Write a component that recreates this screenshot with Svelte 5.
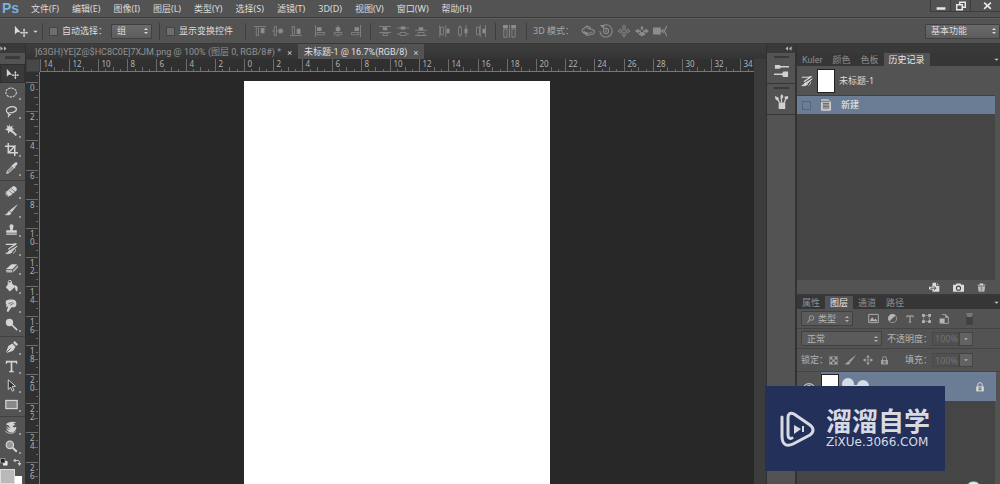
<script>
    const menus = ['文件(F)', '编辑(E)', '图像(I)', '图层(L)', '类型(Y)', '选择(S)', '滤镜(T)', '3D(D)', '视图(V)', '窗口(W)', '帮助(H)'];

    // inner markup of every icon, all on a 16 x 16 grid
    const icons = {
        move: '<path d="M1 2v10l2.500-2.500h4z" fill="currentColor"/><path d="M11.500 6v8M7.500 10h8" stroke="currentColor" stroke-width="1.200"/><path d="M11.500 5l1.500 2h-3zM11.500 15l1.500-2h-3zM7 10l2-1.500v3zM16 10l-2-1.500v3z" fill="currentColor"/>',
        marquee: '<ellipse cx="7.500" cy="8" rx="6.500" ry="5.500" fill="none" stroke="currentColor" stroke-width="1.300" stroke-dasharray="3 1"/>',
        lasso: '<path d="M4 10C-1 7 3 2 9 2s7 5 1 7c-3 1-7 0-6 2s4 0 2 1-2 1-2 3" fill="none" stroke="currentColor" stroke-width="1.500"/>',
        wand: '<path d="M6 6l8 8" stroke="currentColor" stroke-width="2.500"/><path d="M5.500 0l1 3.500L10 2 8.500 5l3.500 1.500-3.500 1L9 11 6 9l-2 3-.5-4L0 7l3-2-1-3.500 3 1.500z" fill="currentColor"/>',
        crop: '<path d="M4 0v12h12M0 4h12v12M5 11l8-8" fill="none" stroke="currentColor" stroke-width="1.800"/>',
        dropper: '<path d="M2 14l1-3 6-6 2 2-6 6z" fill="currentColor" fill-opacity=".4" stroke="currentColor" stroke-width="1.200"/><path d="M8 4l4 4 1-1-1-1 3-3c1-2-1-4-3-2L9 4 8 3z" fill="currentColor"/>',
        heal: '<path d="M2 8l7-6c3-2 7 2 5 5l-7 6c-3 2-7-2-5-5z" fill="currentColor"/><path d="M5 7l5 4M7 4l6 5" stroke="#666"/><path d="M1 8c-2 3 0 6 4 6" fill="none" stroke="currentColor" stroke-dasharray="1 1"/>',
        brush: '<path d="M15 1L8 10 6 8zM5 9l2.500 2C7 14 3 14 0 13c3 0 3-3 5-4z" fill="currentColor" stroke="currentColor" stroke-width=".6"/>',
        stamp: '<path d="M5.500 4a2.500 2.500 0 1 1 5 0c0 2-1 2-1 5h5v3h-13V9h5c0-3-1-3-1-5zM1.500 13h13v1.500h-13z" fill="currentColor"/>',
        history: '<path d="M15 5l-6 6-2-1zM6 10l3 2c-2 2-5 3-8 2 3 0 3-3 5-4z" fill="currentColor" stroke="currentColor"/><path d="M1 3h9l4-1-6 4-4 3" fill="none" stroke="currentColor" stroke-width="1.500"/><path d="M13 9c0 2-1 4-3 5" fill="none" stroke="currentColor"/>',
        eraser: '<path d="M1 10l7-6h7l-6 6z" fill="currentColor"/><path d="M1 11h8v3H2zM10 11l6-6v3l-6 6z" fill="currentColor" opacity=".75"/>',
        bucket: '<path d="M6 2l7 6-7 6-5-5z" fill="currentColor"/><path d="M4 8V2c0-2 4-2 4 0v5" fill="none" stroke="currentColor" stroke-width="1.200"/><path d="M12 6c4 1 4 4 3 8-3-1-2-4-3-5z" fill="currentColor"/>',
        smudge: '<path d="M1 2c4-2 10-2 12 0 2 3 1 7-1 8H8l-4 6-2-1 2-6-3 1 1-3-1-1z" fill="currentColor"/><path d="M4 6l5-2M6 8l5-3" stroke="#666"/>',
        dodge: '<circle cx="5.500" cy="5.500" r="4.500" fill="currentColor"/><path d="M8 8l7 7" stroke="currentColor" stroke-width="2"/>',
        pen: '<path d="M1 15l3-9 5-3 4 4-3 5z" fill="currentColor"/><path d="M1 15l6-6" stroke="#444"/><path d="M10 2l2-2 4 4-2 2z" fill="currentColor"/>',
        type: '<path d="M1 1h14v4h-1l-1-2H9v10l2 1v1H5v-1l2-1V3H3L2 5H1z" fill="currentColor"/>',
        arrow: '<path d="M4 1v12l3-3 2 5 2-1-2-5h4z" fill="#333" stroke="currentColor" stroke-width="1.200"/>',
        rect: '<rect x="1" y="3" width="14" height="10" fill="#888" stroke="currentColor" stroke-width="1.500"/>',
        rotate: '<path d="M1 4c3-3 9-4 13-2l-4 1 3 2-4 1 2 2 3-1c0 4-2 6-5 7-4 1-6-2-8-5l5 2-5-5 6 3-4-5 5 3" fill="currentColor"/><path d="M0 12c3 4 10 4 13 1" fill="none" stroke="currentColor"/>',
        zoom: '<circle cx="6" cy="6" r="4.500" fill="#999" stroke="currentColor" stroke-width="1.500"/><path d="M9.500 9.500l5 5" stroke="currentColor" stroke-width="2.500"/>',
        alignTop: '<path d="M0 2h16" stroke="currentColor"/><path d="M3 4h3v10H3z" fill="none" stroke="currentColor"/><path d="M9 4h5v7H9z" fill="currentColor"/>',
        alignMid: '<path d="M0 8h16" stroke="currentColor"/><path d="M3 2h3v12H3z" fill="#535353" stroke="currentColor"/><path d="M9 5h5v6H9z" fill="currentColor"/>',
        alignBottom: '<path d="M0 14h16" stroke="currentColor"/><path d="M3 2h3v10H3z" fill="none" stroke="currentColor"/><path d="M9 5h5v7H9z" fill="currentColor"/>',
        alignLeft: '<path d="M2 0v16" stroke="currentColor"/><path d="M4 10h10v3H4z" fill="none" stroke="currentColor"/><path d="M4 3h6v5H4z" fill="currentColor"/>',
        alignCenter: '<path d="M8 0v16" stroke="currentColor"/><path d="M3 10h10v3H3z" fill="#535353" stroke="currentColor"/><path d="M5 3h6v5H5z" fill="currentColor"/>',
        alignRight: '<path d="M14 0v16" stroke="currentColor"/><path d="M2 10h10v3H2z" fill="none" stroke="currentColor"/><path d="M6 3h6v5H6z" fill="currentColor"/>',
        distTop: '<path d="M0 2h16M0 10h16" stroke="currentColor"/><path d="M5 3h6v4H5z" fill="currentColor"/><path d="M5 11h6v3H5z" fill="none" stroke="currentColor"/>',
        distMid: '<path d="M0 4h16M0 12h16" stroke="currentColor"/><path d="M5 2h6v4H5z" fill="currentColor"/><path d="M4 10h8v4H4z" fill="#535353" stroke="currentColor"/>',
        distBottom: '<path d="M0 7h16M0 14h16" stroke="currentColor"/><path d="M5 3h6v4H5z" fill="currentColor"/><path d="M4 10h8v4H4z" fill="none" stroke="currentColor"/>',
        distLeft: '<path d="M1 0v16M9 0v16" stroke="currentColor"/><path d="M2 3h4v10H2z" fill="none" stroke="currentColor"/><path d="M10 5h4v6h-4z" fill="currentColor"/>',
        distCenter: '<path d="M4 0v16M12 0v16" stroke="currentColor"/><path d="M2 3h4v10H2z" fill="#535353" stroke="currentColor"/><path d="M10 5h4v6h-4z" fill="currentColor"/>',
        distRight: '<path d="M7 0v16M14 0v16" stroke="currentColor"/><path d="M2 3h4v10H2z" fill="none" stroke="currentColor"/><path d="M10 5h4v6h-4z" fill="currentColor"/>',
        autoAlign: '<path d="M1 5h4v10H1zM11 5h4v10h-4z" fill="none" stroke="currentColor"/><path d="M0 0h6v4H0zM10 0h6v4h-6z" fill="currentColor"/><path d="M8 0v16" stroke="currentColor"/>',
        orbit: '<path d="M7 11c-6 0-8-5-3-6 1-4 7-3 7 1 5 0 6 5 1 6l-6 1M3 8c3 3 7 3 10 1M6 4l5 2" fill="none" stroke="currentColor" stroke-width="1.200"/><path d="M2 10l5-1v5z" fill="currentColor"/>',
        roll: '<circle cx="8" cy="8" r="3" fill="none" stroke="currentColor" stroke-width="1.200"/><path d="M3 3a7 7 0 1 1-2 5" fill="none" stroke="currentColor" stroke-width="1.200"/><path d="M1 1h5v5z" fill="currentColor"/><circle cx="8" cy="8" r="1" fill="currentColor"/>',
        pan: '<path d="M8 1l2 3H9v3h3V6l3 2-3 2V9H9v3h1l-2 3-2-3h1V9H4v1L1 8l3-2v1h3V4H6z" fill="none" stroke="currentColor"/>',
        slide: '<path d="M8 2l2 3H9v2h3V5l4 3-4 3V9h-2l2 3-4 2-4-2 2-3H4v2L0 8l4-3v2h3V5H6z" fill="currentColor"/><circle cx="8" cy="8" r="1.500" fill="#535353"/>',
        camera3d: '<path d="M0 4h9v8H0zM9 8l3-3v6z" fill="currentColor"/><path d="M16 2l-3 6 3 6" fill="none" stroke="currentColor" stroke-width="1.200"/>',
        sliders: '<path d="M1 4h15M0 12h15" stroke="currentColor" stroke-width="1.500"/><path d="M1 2h5l2 2-2 2H1zM8 12l2-3h5v6h-5z" fill="currentColor"/>',
        brushes: '<path d="M5 9h7v7H5z" fill="currentColor"/><path d="M8 9V3M6 9L3 5M11 9l2-5" stroke="currentColor" stroke-width="1.300"/><path d="M1 2l4 2v3C2 7 1 5 1 2zM8 0l2 2-1 3H7V2zM11 3l4-1v3l-3 1z" fill="currentColor"/>',
        sheet: '<path d="M2 1h9l3 3v11H2z" fill="#bbb" stroke="#ddd"/><path d="M0 3h13M4 6h8M4 8h8M4 10h8M4 12h8" stroke="#555"/>',
        newDoc: '<path d="M5 1h6l4 4v9H5v-3H0V7h5z" fill="currentColor"/><path d="M2 9h8M7 6l3 3-3 3M11 1v4h4" fill="none" stroke="#444" stroke-width="1.300"/>',
        camera: '<path d="M0 4h4l1-2h6l1 2h4v10H0z" fill="currentColor"/><circle cx="8" cy="9" r="3" fill="currentColor" stroke="#444" stroke-width="1.500"/>',
        trash: '<path d="M1 3h14v1.500H1zM5 1h6v2H5zM2 6h12l-1 9H3z" fill="currentColor"/><path d="M5.500 7v7M8 7v7M10.500 7v7" stroke="#505050"/>',
        search: '<circle cx="9" cy="6" r="4.500" fill="none" stroke="currentColor" stroke-width="1.500"/><path d="M5.500 9.500L1 15" stroke="currentColor" stroke-width="2"/>',
        picture: '<path d="M1 2h14v12H1z" fill="none" stroke="currentColor" stroke-width="1.300"/><path d="M2 12l4-6 3 4 2-2 3 4z" fill="currentColor"/>',
        adjust: '<circle cx="8" cy="8" r="6" fill="none" stroke="currentColor"/><path d="M12.500 3.500L3.500 12A6 6 0 0 1 12.500 3.500z" fill="currentColor"/>',
        shape: '<path d="M3 3h10v10H3z" fill="none" stroke="currentColor"/><path d="M0 0h5v5H0zM11 0h5v5h-5zM0 11h5v5H0zM11 11h5v5h-5z" fill="currentColor"/>',
        smart: '<path d="M5 1h6l4 4v10H7" fill="none" stroke="currentColor" stroke-width="1.300"/><path d="M1 7h8v8H1zM10 1v5h5z" fill="currentColor"/>',
        checker: '<path d="M1 1h14v14H1z" fill="none" stroke="currentColor"/><path d="M2 2h4v4H2zM10 2h4v4h-4zM6 6h4v4H6zM2 10h4v4H2zM10 10h4v4h-4z" fill="currentColor"/>',
        cross: '<path d="M8 1v14M1 8h14" stroke="currentColor"/><path d="M8 0l3 4H5zM8 16l3-4H5zM0 8l4-3v6zM16 8l-4-3v6z" fill="currentColor"/>',
        lock: '<path d="M4.500 7V4.500a3.500 3.500 0 0 1 7 0V7" fill="none" stroke="currentColor" stroke-width="1.500"/><path d="M2 7h12v8H2z" fill="currentColor"/><path d="M5 9.500h6M5 12.500h6M8 9v4" stroke="#555" stroke-width="1.200"/>',
        eye: '<path d="M1 8c3-6 11-6 14 0-3 6-11 6-14 0z" fill="none" stroke="currentColor" stroke-width="1.500"/><circle cx="8" cy="8" r="3" fill="currentColor"/>',
        collapse: '<path d="M7 3v10L1 8zM15 3v10L9 8z" fill="currentColor"/>',
        expand: '<path d="M1 3v10l6-5zM9 3v10l6-5z" fill="currentColor"/>',
        swap: '<path d="M4 5h6c3 0 3 2 3 6" fill="none" stroke="currentColor" stroke-width="2"/><path d="M5 1v8L0 5zM9 10h8l-4 6z" fill="currentColor"/>',
        defaults: '<path d="M6 6h9v9H6z" fill="#eee"/><path d="M1 1h9v9H1z" fill="#222" stroke="#aaa" stroke-width="1.500"/>',
        updown: '<path d="M8 2l4 4H4zM8 14l4-4H4z" fill="currentColor"/>',
        down: '<path d="M3 6h10l-5 5z" fill="currentColor"/>',
        minimize: '<path d="M1 10h14v4H1z" fill="currentColor"/>',
        restore: '<path d="M6 6V2h9v8h-4M1 6h9v8H1z" fill="none" stroke="currentColor" stroke-width="2.500"/>',
        close: '<path d="M2 3l12 11M14 3L2 14" stroke="currentColor" stroke-width="3"/>'
    };

    const toolGroups = [
        ['move', 'marquee', 'lasso', 'wand', 'crop', 'dropper'],
        ['heal', 'brush', 'stamp', 'history', 'eraser', 'bucket', 'smudge', 'dodge'],
        ['pen', 'type', 'arrow', 'rect'],
        ['rotate', 'zoom']
    ];

    const alignGroups = [
        ['alignTop', 'alignMid', 'alignBottom'],
        ['alignLeft', 'alignCenter', 'alignRight']
    ];

    const distGroups = [
        ['distTop', 'distMid', 'distBottom'],
        ['distLeft', 'distCenter', 'distRight']
    ];

    const modes = ['orbit', 'roll', 'pan', 'slide', 'camera3d'];

    // the zero of each ruler, measured from the ruler's start
    const unit = 14.6;
    const originX = 204;
    const originY = 10;

    let rulerWidth = $state(0);
    let rulerHeight = $state(0);

    // ticks at every half unit, labels at every second unit that still has room
    function ticks(origin, from, length) {
        const list = [];
        for (let n = from; origin + n * unit < length; n += 0.5) {
            const at = Math.round(origin + n * unit) + 0.5;
            const even = n % 2 === 0;
            list.push({
                at,
                size: even ? 12 : n % 1 === 0 ? 4 : 2,
                label: even && at + 12 < length ? String(Math.abs(n)) : ''
            });
        }
        return list;
    }

    let ticksX = $derived(ticks(originX, -14, rulerWidth));
    let ticksY = $derived(ticks(originY, -0.5, rulerHeight));

    let tool = $state('move');
    let autoSelect = $state(false);
    let showControls = $state(false);
</script>

{#snippet icon(name, size = 12)}
    <svg class="icon" width={size} height={size} viewBox="0 0 16 16" aria-hidden="true">{@html icons[name]}</svg>
{/snippet}

<div class="app">
    <header class="menubar">
        <span class="ps">Ps</span>
        <nav>
            {#each menus as menu}
                <button>{menu}</button>
            {/each}
        </nav>
        <div class="window-buttons">
            <button aria-label="最小化">{@render icon('minimize', 10)}</button>
            <button aria-label="还原">{@render icon('restore', 10)}</button>
            <button aria-label="关闭" class="wide">{@render icon('close', 9)}</button>
        </div>
    </header>

    <div class="options">
        <span class="current">{@render icon('move', 14)}{@render icon('down', 7)}</span>
        <i class="sep"></i>
        <label class="check"><input type="checkbox" bind:checked={autoSelect}>自动选择：</label>
        <div class="select target">
            <select aria-label="自动选择"><option>组</option></select>
            {@render icon('updown', 8)}
        </div>
        <i class="sep"></i>
        <label class="check wide"><input type="checkbox" bind:checked={showControls}>显示变换控件</label>
        <i class="sep"></i>
        <div class="aligns">
            {#each alignGroups as group}
                <div class="icon-row">
                    {#each group as name}<button aria-label={name}>{@render icon(name)}</button>{/each}
                </div>
            {/each}
        </div>
        <i class="sep"></i>
        <div class="aligns">
            {#each distGroups as group}
                <div class="icon-row">
                    {#each group as name}<button aria-label={name}>{@render icon(name)}</button>{/each}
                </div>
            {/each}
        </div>
        <i class="sep"></i>
        <div class="icon-row auto"><button aria-label="自动对齐">{@render icon('autoAlign', 13)}</button></div>
        <i class="sep"></i>
        <span class="mode">3D 模式：</span>
        <div class="icon-row modes">
            {#each modes as name}<button aria-label={name}>{@render icon(name, 14)}</button>{/each}
        </div>
        <div class="select workspace">
            <select aria-label="工作区"><option>基本功能</option></select>
            {@render icon('updown', 8)}
        </div>
    </div>

    <main>
        <aside class="tools">
            <div class="dock-head">{@render icon('expand', 7)}</div>
            <div class="tool-list">
                <i class="grip"></i>
                {#each toolGroups as group}
                    <div class="tool-group">
                        {#each group as name}
                            <button class="tool" class:active={tool === name} aria-label={name} onclick={() => (tool = name)}>
                                {@render icon(name, 13)}
                            </button>
                        {/each}
                    </div>
                {/each}
                <div class="small-icons">{@render icon('defaults', 8)}{@render icon('swap', 8)}</div>
                <div class="swatches"><i class="front"></i><i class="back"></i></div>
            </div>
        </aside>

        <section class="document">
            <div class="doc-tabs">
                <div class="doc-tab">]63GH)YE[Z@$HC8C0E]7XJM.png @ 100% (图层 0, RGB/8#) * <button aria-label="关闭">×</button></div>
                <div class="doc-tab active">未标题-1 @ 16.7%(RGB/8) <button aria-label="关闭">×</button></div>
            </div>
            <div class="workarea">
                <i class="corner"></i>
                <div class="ruler horizontal" bind:clientWidth={rulerWidth}>
                    <svg aria-hidden="true">
                        {#each ticksX as t}
                            <line x1={t.at} x2={t.at} y1={12 - t.size} y2="12" />
                            {#if t.label}<text x={t.at + 3} y="8">{t.label}</text>{/if}
                        {/each}
                    </svg>
                </div>
                <div class="ruler vertical" bind:clientHeight={rulerHeight}>
                    <svg aria-hidden="true">
                        {#each ticksY as t}
                            <line x1={12 - t.size} x2="12" y1={t.at} y2={t.at} />
                            {#each t.label as digit, i}
                                <text x="4" y={t.at + 8 + i * 8}>{digit}</text>
                            {/each}
                        {/each}
                    </svg>
                </div>
                <div class="canvas"><div class="page"></div></div>
            </div>
        </section>

        <aside class="dock">
            <div class="dock-head right">{@render icon('collapse', 7)}</div>
            <div class="dock-item"><i class="grip"></i><button aria-label="属性">{@render icon('sliders', 15)}</button></div>
            <div class="dock-item"><i class="grip"></i><button aria-label="画笔">{@render icon('brushes', 15)}</button></div>
            <div class="dock-rest"></div>
        </aside>

        <aside class="panels">
            <div class="dock-head"></div>
            <section class="panel history">
                <div class="tabs">
                    <button>Kuler</button>
                    <button>颜色</button>
                    <button>色板</button>
                    <button class="active">历史记录</button>
                    <span class="menu-mark">{@render icon('down', 7)}</span>
                </div>
                <div class="snapshot">
                    {@render icon('history', 12)}
                    <i class="thumb"></i>
                    <span>未标题-1</span>
                </div>
                <div class="step"><i class="step-box"></i>{@render icon('sheet', 12)}<span>新建</span></div>
                <div class="fill"></div>
                <div class="panel-foot">
                    <button aria-label="从当前状态创建新文档">{@render icon('newDoc', 11)}</button>
                    <button aria-label="创建新快照">{@render icon('camera', 11)}</button>
                    <button aria-label="删除">{@render icon('trash', 9)}</button>
                </div>
            </section>
            <section class="panel layers">
                <div class="tabs">
                    <button>属性</button>
                    <button class="active">图层</button>
                    <button>通道</button>
                    <button>路径</button>
                    <span class="menu-mark">{@render icon('down', 7)}</span>
                </div>
                <div class="row">
                    <div class="select kind">
                        {@render icon('search', 8)}
                        <select aria-label="类型"><option>类型</option></select>
                        {@render icon('updown', 8)}
                    </div>
                    <div class="filters">
                        {@render icon('picture', 11)}
                        {@render icon('adjust', 11)}
                        {@render icon('type', 8)}
                        {@render icon('shape', 9)}
                        {@render icon('smart', 10)}
                    </div>
                    <i class="toggle"></i>
                </div>
                <div class="row">
                    <div class="select blend">
                        <select aria-label="混合模式"><option>正常</option></select>
                        {@render icon('updown', 8)}
                    </div>
                    <label class="amount">不透明度：<input value="100%" disabled></label>
                    <button class="drop" aria-label="不透明度">{@render icon('down', 6)}</button>
                </div>
                <div class="row last">
                    <span>锁定：</span>
                    <div class="locks">
                        {@render icon('checker', 9)}
                        {@render icon('brush', 11)}
                        {@render icon('cross', 10)}
                        {@render icon('lock', 9)}
                    </div>
                    <label class="amount">填充：<input value="100%" disabled></label>
                    <button class="drop" aria-label="填充">{@render icon('down', 6)}</button>
                </div>
                <div class="layer">
                    <span class="visible">{@render icon('eye', 12)}</span>
                    <div class="layer-body">
                        <i class="layer-thumb"></i>
                        <svg class="cloud" width="30" height="17" viewBox="0 0 30 17" aria-hidden="true">
                            <circle cx="9" cy="6" r="6" /><circle cx="24" cy="8" r="6" /><path d="M9 7h14v6H9z" />
                        </svg>
                        {@render icon('lock', 10)}
                    </div>
                </div>
                <div class="fill"></div>
            </section>
        </aside>
    </main>

    <div class="watermark">
        <svg width="36" height="38" viewBox="0 0 36 38" aria-hidden="true">
            <path d="M3 7v19c0 9 5 11 11 8l17-9c4-3 4-7 0-10L15 4c-4-2-6 0-6 4v17c0 3 2 4 4 3" fill="none" stroke="currentColor" stroke-width="3" stroke-linecap="round" stroke-linejoin="round" />
            <path d="M15 15l7 4-7 5zM23 16h2v6h-2z" fill="currentColor" />
        </svg>
        <div class="mark-text">
            <strong>溜溜自学</strong>
            <span>ZiXUe.3066.COM</span>
        </div>
    </div>
    <i class="ball"></i>
</div>

<style>
    :global(body) {
        margin: 0;
        background: #282828;
    }
    * {
        box-sizing: border-box;
    }
    .app {
        position: relative;
        display: flex;
        flex-direction: column;
        height: 100vh;
        overflow: hidden;
        background: #535353;
        color: #dcdcdc;
        font: 9px/12px "Noto Sans", "Noto Sans CJK SC", sans-serif;
    }
    button, input, select {
        margin: 0;
        padding: 0;
        border: 0;
        background: none;
        color: inherit;
        font: inherit;
    }
    i {
        display: block;
    }
    .icon {
        display: block;
        flex: none;
    }
    .menubar {
        display: flex;
        flex: none;
        height: 18px;
        border-bottom: 1px solid #3c3c3c;
    }
    .ps {
        width: 31px;
        padding-left: 2px;
        color: #7ab0dc;
        font: bold 14px/16px "Liberation Sans", sans-serif;
    }
    nav {
        display: flex;
        gap: 13px;
        align-items: center;
        white-space: nowrap;
    }
    .window-buttons {
        display: flex;
        height: 12px;
        margin-left: auto;
        border: 1px solid #3c3c3c;
        border-width: 0 0 1px 1px;
        color: #e8e8e8;
    }
    .window-buttons button {
        display: grid;
        place-items: center;
        width: 20px;
        border-right: 1px solid #3c3c3c;
    }
    .window-buttons .wide {
        width: 29px;
        padding-left: 4px;
        border: 0;
    }
    .options {
        display: flex;
        flex: none;
        align-items: center;
        height: 26px;
        border-top: 1px solid #5e5e5e;
        border-bottom: 1px solid #383838;
        white-space: nowrap;
    }
    .current {
        display: flex;
        gap: 4px;
        align-items: center;
        padding-left: 14px;
    }
    .sep {
        flex: none;
        width: 1px;
        height: 17px;
        margin: 0 6px 0 3px;
        background: #3e3e3e;
    }
    .check {
        display: flex;
        gap: 4px;
        align-items: center;
        padding-right: 4px;
    }
    .check.wide {
        padding-right: 9px;
    }
    .check input {
        width: 9px;
        height: 9px;
        border: 1px solid #444;
        background: #6e6e6e;
        appearance: none;
    }
    .check input:checked {
        background: #ccc;
    }
    .select {
        display: flex;
        align-items: center;
        height: 15px;
        padding: 0 1px 0 5px;
        border: 1px solid #404040;
        border-radius: 1px;
        background: linear-gradient(#6a6a6a, #5c5c5c);
    }
    .select select {
        flex: 1;
        min-width: 0;
        appearance: none;
    }
    .target {
        width: 41px;
        margin-right: 4px;
    }
    .aligns {
        display: flex;
        gap: 12px;
        padding: 0 5px 0 2px;
    }
    .icon-row {
        display: flex;
        gap: 6px;
        color: #8c8c8c;
    }
    .auto {
        padding: 0 7px 0 1px;
    }
    .mode {
        width: 48px;
        color: #a8a8a8;
    }
    .modes {
        gap: 4px;
    }
    .workspace {
        width: 75px;
        margin-left: auto;
    }
    main {
        display: flex;
        flex: 1;
        min-height: 0;
    }
    .dock-head {
        display: flex;
        flex: none;
        align-items: center;
        height: 9px;
        background: #393939;
        color: #b4b4b4;
    }
    .dock-head.right {
        justify-content: flex-end;
        padding-right: 3px;
    }
    .tools {
        flex: none;
        width: 26px;
        border-right: 1px solid #303030;
        background: #535353;
    }
    .tool-list {
        display: flex;
        flex-direction: column;
    }
    .grip {
        width: 15px;
        height: 3px;
        margin: 3px auto 5px 5px;
        background: #3a3a3a;
    }
    .tool-group + .tool-group {
        margin-top: 2px;
        padding-top: 1px;
        border-top: 1px solid #404040;
    }
    .tool {
        position: relative;
        display: block;
        width: 25px;
        height: 19px;
        padding-left: 5px;
        color: #d4d4d4;
    }
    .tool::after {
        content: "";
        position: absolute;
        right: 4px;
        bottom: 2px;
        width: 2px;
        height: 2px;
        background: #999;
    }
    .tool.active {
        border: 1px solid #303030;
        background: #3a3a3a;
    }
    .tool.active::after {
        display: none;
    }
    .small-icons {
        display: flex;
        gap: 5px;
        padding-top: 2px;
        color: #ccc;
    }
    .swatches {
        display: flex;
        align-items: flex-start;
        padding-top: 3px;
    }
    .front {
        width: 15px;
        height: 15px;
        border: 1px solid #ddd;
        background: #b9b9b9;
    }
    .back {
        width: 7px;
        height: 14px;
        margin-top: 7px;
        background: #fff;
    }
    .document {
        display: flex;
        flex: 1;
        flex-direction: column;
        min-width: 0;
        border-right: 1px solid #303030;
        background: #3c3c3c;
    }
    .doc-tabs {
        display: flex;
        flex: none;
        height: 15px;
        background: linear-gradient(#3e3e3e, #343434);
        white-space: nowrap;
    }
    .doc-tab {
        display: flex;
        gap: 6px;
        padding: 2px 6px 0 9px;
        color: #929292;
        font-family: Roboto, "Noto Sans CJK SC", sans-serif;
    }
    .doc-tab button {
        color: #ccc;
    }
    .doc-tab.active {
        padding-left: 6px;
        background: #535353;
        color: #e0e0e0;
    }
    .workarea {
        display: grid;
        flex: 1;
        grid-template: 13px 1fr / 14px 1fr;
        min-height: 0;
        padding-right: 12px;
    }
    .corner {
        margin: 1px;
        background: #484848;
    }
    .ruler {
        min-width: 0;
        min-height: 0;
        overflow: hidden;
        background: #303030;
    }
    .ruler svg {
        display: block;
        width: 100%;
        height: 100%;
        fill: #b0b0b0;
        font: 8px "Noto Sans", sans-serif;
    }
    .ruler line {
        stroke: #6c6c6c;
    }
    .horizontal {
        border-bottom: 1px solid #777;
    }
    .vertical {
        border-right: 1px solid #777;
    }
    .canvas {
        min-width: 0;
        overflow: hidden;
        padding: 9px 0 0 204px;
        background: #282828;
    }
    .page {
        width: 306px;
        height: 433px;
        background: #fff;
    }
    .dock {
        display: flex;
        flex: none;
        flex-direction: column;
        width: 30px;
        border-right: 2px solid #333;
    }
    .dock-item {
        flex: none;
        height: 31px;
        border-bottom: 1px solid #363636;
        background: #535353;
    }
    .dock-item .grip {
        height: 2px;
        margin: 3px 0 5px 7px;
    }
    .dock-item button {
        display: block;
        margin-left: 7px;
        color: #d0d0d0;
    }
    .dock-rest {
        flex: 1;
        background: #535353;
    }
    .panels {
        display: flex;
        flex: none;
        flex-direction: column;
        width: 203px;
        background: #535353;
    }
    .panel {
        display: flex;
        flex-direction: column;
        min-height: 0;
    }
    .history {
        flex: none;
        height: 243px;
        border-bottom: 2px solid #383838;
    }
    .layers {
        flex: 1;
    }
    .tabs {
        display: flex;
        flex: none;
        height: 13px;
        background: #363636;
        color: #8e8e8e;
        font-family: Roboto, "Noto Sans CJK SC", sans-serif;
    }
    .tabs button {
        padding: 0 5px;
    }
    .tabs .active {
        background: #535353;
        color: #e8e8e8;
    }
    .menu-mark {
        margin-left: auto;
        padding: 3px 0;
        color: #ccc;
    }
    .snapshot {
        display: flex;
        flex: none;
        gap: 4px;
        align-items: center;
        height: 30px;
        margin-right: 5px;
        padding-left: 4px;
        border-bottom: 1px solid #404040;
    }
    .thumb {
        width: 18px;
        height: 24px;
        border: 1px solid #222;
        background: #fff;
    }
    .step {
        display: flex;
        flex: none;
        gap: 9px;
        align-items: center;
        height: 18px;
        margin-right: 5px;
        padding-left: 5px;
        background: #6b7d94;
        color: #f0f0f0;
    }
    .step-box {
        width: 9px;
        height: 9px;
        border: 1px solid #55657a;
    }
    .fill {
        flex: 1;
        margin-right: 5px;
        background: #454545;
    }
    .panel-foot {
        display: flex;
        flex: none;
        gap: 13px;
        align-items: center;
        justify-content: flex-end;
        height: 14px;
        padding-right: 14px;
        color: #dcdcdc;
    }
    .row {
        display: flex;
        flex: none;
        align-items: center;
        height: 20px;
        padding-left: 4px;
        border-bottom: 1px solid #444;
        color: #b4b4b4;
        white-space: nowrap;
    }
    .row.last {
        height: 23px;
    }
    .row .select {
        background: #5b5b5b;
    }
    .kind {
        gap: 3px;
        width: 52px;
    }
    .filters {
        display: flex;
        gap: 8px;
        align-items: center;
        padding-left: 15px;
    }
    .toggle {
        width: 7px;
        height: 12px;
        margin-left: 17px;
        border: 1px solid #444;
        border-top: 4px solid #777;
        background: #404040;
    }
    .blend {
        width: 81px;
        margin-right: 5px;
    }
    .amount {
        display: flex;
        align-items: center;
    }
    .amount input {
        width: 27px;
        height: 14px;
        padding-left: 2px;
        border: 1px solid #484848;
        background: #505050;
        color: #727272;
    }
    .drop {
        display: grid;
        place-items: center;
        width: 14px;
        height: 14px;
        border: 1px solid #444;
        background: #626262;
    }
    .locks {
        display: flex;
        gap: 7px;
        align-items: center;
        width: 77px;
        padding-left: 1px;
        color: #a8a8a8;
    }
    .layer {
        display: flex;
        flex: none;
        height: 29px;
        margin-right: 4px;
    }
    .visible {
        display: grid;
        place-items: center;
        width: 24px;
        color: #bbb;
    }
    .layer-body {
        display: flex;
        flex: 1;
        align-items: center;
        padding-right: 11px;
        background: #6b7d94;
        color: #ddd;
    }
    .layer-body > :global(.icon) {
        margin-left: auto;
    }
    .layer-thumb {
        width: 18px;
        height: 25px;
        border: 1px solid #222;
        background: #fff;
    }
    .cloud {
        fill: #d5dce6;
    }
    .watermark {
        position: absolute;
        right: 55px;
        bottom: 13px;
        display: flex;
        gap: 11px;
        align-items: center;
        width: 180px;
        height: 85px;
        padding-left: 14px;
        background: #22305a;
        color: #d8dae2;
    }
    .mark-text {
        display: flex;
        flex-direction: column;
        padding-bottom: 4px;
    }
    .mark-text strong {
        font: bold 26px/30px "Noto Sans CJK SC", sans-serif;
    }
    .mark-text span {
        font: 12px/14px "DejaVu Sans", sans-serif;
    }
    .ball {
        position: absolute;
        right: 18px;
        bottom: -14px;
        width: 17px;
        height: 17px;
        border: 1px solid #4fa650;
        border-radius: 50%;
        background: #e8f4e8;
    }
</style>
